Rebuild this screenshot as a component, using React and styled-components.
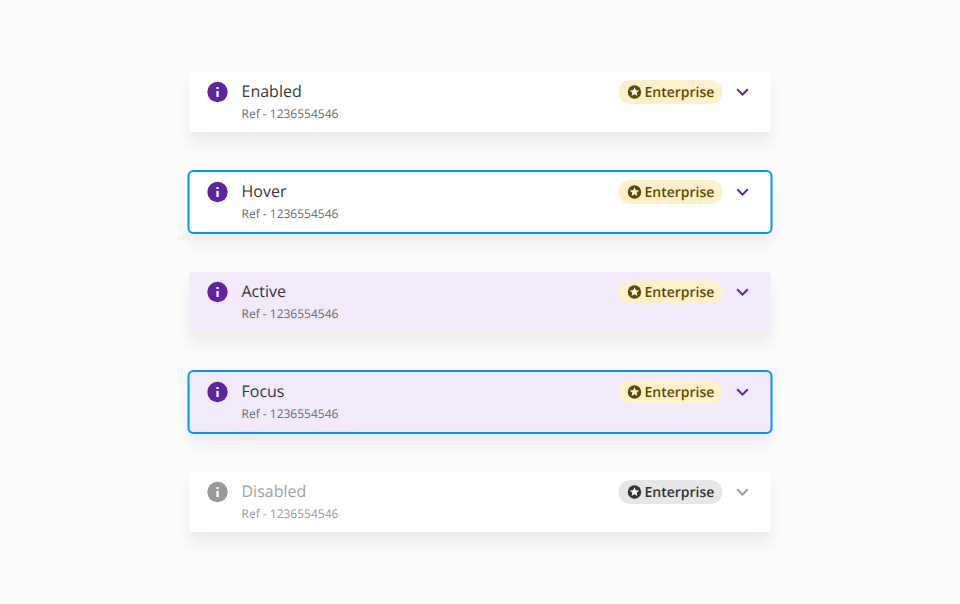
import React from 'react';
import styled, { createGlobalStyle } from 'styled-components';

const Global = createGlobalStyle`
  body {
    margin: 0;
    background: #fafafa;
    font-family: "Open Sans", sans-serif;
    text-rendering: geometricPrecision;
    -webkit-font-smoothing: antialiased;
  }
`;
const Page = styled.main`
  box-sizing: border-box;
  height: 604px;
  padding: 72px 0 0 1px;
  display: flex;
  flex-direction: column;
  align-items: center;
  gap: 40px;
`;
const Accordion = styled.section`
  box-sizing: border-box;
  width: 581px;
  height: 60px;
  padding: 8px 16px 0;
  display: flex;
  align-items: flex-start;
  border-radius: 4px;
  transform: translateX(-0.5px);
  background: ${(p) => (p.$filled ? '#f2e9fa' : '#fff')};
  box-shadow: ${(p) => (p.$outlined ? '0 0 0 2px #0095ff, ' : '')}0 12px 14px rgba(0, 0, 0, 0.06);
  color: ${(p) => (p.$disabled ? '#999' : '#5f249f')};
`;
const InfoIcon = styled.svg`
  width: 24px;
  height: 24px;
  flex: none;
`;
const Heading = styled.div`
  flex: 1;
  margin: -1px 0 0 12px;
`;
const Title = styled.div`
  font-size: 16px;
  line-height: 24px;
  color: ${(p) => (p.$disabled ? '#9f9f9f' : '#383838')};
`;
const Reference = styled.div`
  font-size: 12px;
  line-height: 22px;
  color: ${(p) => (p.$disabled ? '#999' : '#6a6a6a')};
`;
const Badge = styled.div`
  box-sizing: border-box;
  width: 104px;
  height: 24px;
  padding-left: 8px;
  margin-right: 8px;
  display: flex;
  align-items: center;
  gap: 2px;
  border-radius: 12px;
  font-size: 14px;
  font-weight: 600;
  background: ${(p) => (p.$disabled ? '#e6e6e6' : '#fdf1cb')};
  color: ${(p) => (p.$disabled ? '#333' : '#5f4b00')};
`;
const BadgeLabel = styled.span`
  padding-top: 2px;
  line-height: 22px;
`;
const StarIcon = styled.svg`
  width: 16px;
  height: 16px;
  flex: none;
`;
const Chevron = styled.svg`
  width: 24px;
  height: 24px;
  flex: none;
`;

const items = [
  { name: 'Enabled' },
  { name: 'Hover', outlined: true },
  { name: 'Active', filled: true },
  { name: 'Focus', outlined: true, filled: true },
  { name: 'Disabled', disabled: true },
];

export default function App() {
  return (
    <>
      <Global />
      <Page>
        {items.map(({ name, outlined, filled, disabled }) => (
          <Accordion key={name} $outlined={outlined} $filled={filled} $disabled={disabled}>
            <InfoIcon viewBox="0 0 24 24" fill="currentColor">
              <circle cx="12" cy="12" r="10.2" />
              <path d="M10.9 7h2.3v2h-2.3zM10.9 10.9h2.3V17h-2.3z" fill="#fff" />
            </InfoIcon>
            <Heading>
              <Title $disabled={disabled}>{name}</Title>
              <Reference $disabled={disabled}>Ref - 1236554546</Reference>
            </Heading>
            <Badge $disabled={disabled}>
              <StarIcon viewBox="0 0 24 24" fill="currentColor">
                <circle cx="12" cy="12" r="10.1" />
                <path d="M16.4 18.1 12 15.5l-4.4 2.6 1.15-4.9-3.9-3.35 5.1-.43L12 4.7l2.05 4.72 5.1.43-3.9 3.35z" fill={disabled ? '#f2f2f2' : '#fff8e4'} />
              </StarIcon>
              <BadgeLabel>Enterprise</BadgeLabel>
            </Badge>
            <Chevron viewBox="0 0 24 24" fill="currentColor">
              <path d="M7.41 8.59 12 13.17l4.59-4.58L18 10l-6 6-6-6z" />
            </Chevron>
          </Accordion>
        ))}
      </Page>
    </>
  );
}
